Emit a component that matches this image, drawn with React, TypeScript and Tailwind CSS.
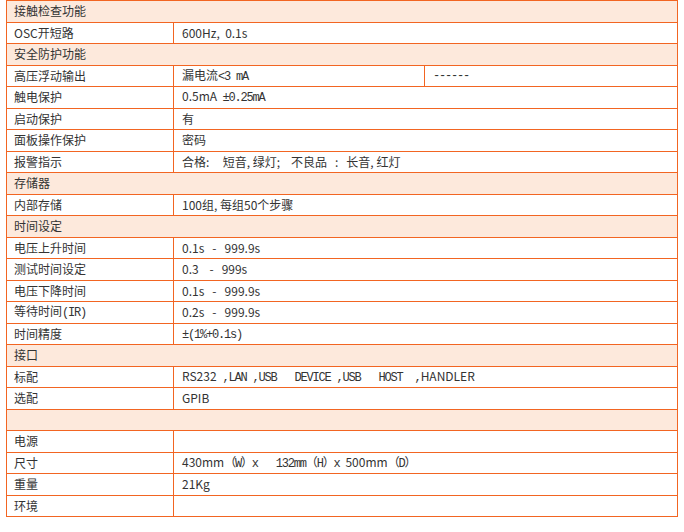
import React from 'react';

type Row =
  | { kind: 'head'; label: string }
  | { kind: 'item'; label: React.ReactNode; value: React.ReactNode; extra?: string };

const M = ({ children }: { children: React.ReactNode }) => (
  <span className="font-['Liberation_Mono','Noto_Sans_CJK_SC',monospace] text-[12px] tracking-[-1.2px]">
    {children}
  </span>
);

const rows: Row[] = [
  { kind: 'head', label: '接触检查功能' },
  { kind: 'item', label: 'OSC开短路', value: '600Hz,  0.1s' },
  { kind: 'head', label: '安全防护功能' },
  { kind: 'item', label: '高压浮动输出', value: <>漏电流<M>&lt;3 mA</M></>, extra: '------' },
  { kind: 'item', label: '触电保护', value: <>0.5mA  <M>±0.25mA</M></> },
  { kind: 'item', label: '启动保护', value: '有' },
  { kind: 'item', label: '面板操作保护', value: '密码' },
  { kind: 'item', label: '报警指示', value: '合格:     短音, 绿灯;    不良品   :   长音, 红灯' },
  { kind: 'head', label: '存储器' },
  { kind: 'item', label: '内部存储', value: '100组, 每组50个步骤' },
  { kind: 'head', label: '时间设定' },
  { kind: 'item', label: '电压上升时间', value: '0.1s   -   999.9s' },
  { kind: 'item', label: '测试时间设定', value: '0.3    -   999s' },
  { kind: 'item', label: '电压下降时间', value: '0.1s   -   999.9s' },
  { kind: 'item', label: <>等待时间<M>(IR)</M></>, value: '0.2s   -   999.9s' },
  { kind: 'item', label: '时间精度', value: <M>±(1%+0.1s)</M> },
  { kind: 'head', label: '接口' },
  {
    kind: 'item',
    label: '标配',
    value: <>RS232<M> ,LAN ,USB   DEVICE ,USB   HOST  ,</M>HANDLER</>,
  },
  { kind: 'item', label: '选配', value: 'GPIB' },
  { kind: 'head', label: '' },
  { kind: 'item', label: '电源', value: '' },
  {
    kind: 'item',
    label: '尺寸',
    value: <>430mm<M>（W）x   132mm（H）x </M>500mm<M>（D）</M></>,
  },
  { kind: 'item', label: '重量', value: '21Kg' },
  { kind: 'item', label: '环境', value: '' },
];

const cell = 'flex items-center border-r border-[#f26522]';

export default function App() {
  return (
    <div className="bg-white w-[684px] h-[532px] font-['Noto_Sans_CJK_SC',sans-serif] text-[12px] text-[#333]">
      <div className="ml-[6px] w-[672px] border-t border-l border-[#f26522]">
        {rows.map((r, i) =>
          r.kind === 'head' ? (
            <div key={i} className={`h-[21.5px] px-[7px] bg-[#fde9dc] border-b ${cell}`}>
              <span className="whitespace-pre">{r.label}</span>
            </div>
          ) : (
            <div key={i} className="h-[21.5px] flex border-b border-[#f26522]">
              <div className={`w-[167px] px-[7px] ${cell}`}>
                <span className="whitespace-pre">{r.label}</span>
              </div>
              {r.extra !== undefined ? (
                <>
                  <div className={`w-[251px] px-[8px] ${cell}`}>
                    <span className="whitespace-pre">{r.value}</span>
                  </div>
                  <div className={`flex-1 px-[8px] ${cell}`}>
                    <M>{r.extra}</M>
                  </div>
                </>
              ) : (
                <div className={`flex-1 px-[8px] ${cell}`}>
                  <span className="whitespace-pre">{r.value}</span>
                </div>
              )}
            </div>
          )
        )}
      </div>
    </div>
  );
}
